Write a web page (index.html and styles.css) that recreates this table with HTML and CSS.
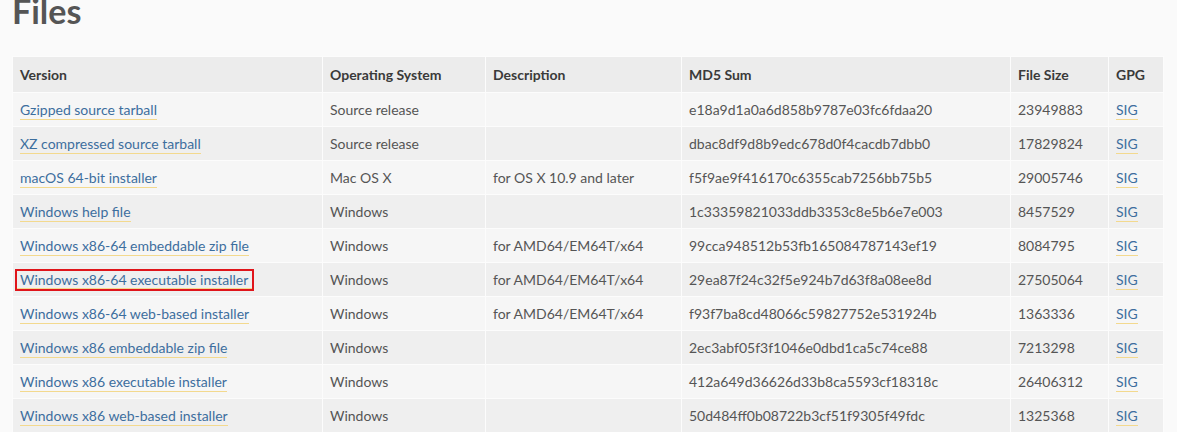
FILE: index.html
```html
<!DOCTYPE html>
<html>
<head>
<meta charset="utf-8">
<link rel="stylesheet" href="styles.css">
</head>
<body>
<div class="page">
  <h1 class="title">Files</h1>
  <table class="files">
    <colgroup>
      <col class="c-ver"><col class="c-os"><col class="c-desc"><col class="c-md5"><col class="c-size"><col class="c-gpg">
    </colgroup>
    <thead>
      <tr><th>Version</th><th>Operating System</th><th>Description</th><th>MD5 Sum</th><th>File Size</th><th>GPG</th></tr>
    </thead>
    <tbody>
      <tr><td><a href="#">Gzipped source tarball</a></td><td>Source release</td><td></td><td>e18a9d1a0a6d858b9787e03fc6fdaa20</td><td>23949883</td><td><a href="#">SIG</a></td></tr>
      <tr><td><a href="#">XZ compressed source tarball</a></td><td>Source release</td><td></td><td>dbac8df9d8b9edc678d0f4cacdb7dbb0</td><td>17829824</td><td><a href="#">SIG</a></td></tr>
      <tr><td><a href="#">macOS 64-bit installer</a></td><td>Mac OS X</td><td>for OS X 10.9 and later</td><td>f5f9ae9f416170c6355cab7256bb75b5</td><td>29005746</td><td><a href="#">SIG</a></td></tr>
      <tr><td><a href="#">Windows help file</a></td><td>Windows</td><td></td><td>1c33359821033ddb3353c8e5b6e7e003</td><td>8457529</td><td><a href="#">SIG</a></td></tr>
      <tr><td><a href="#">Windows x86-64 embeddable zip file</a></td><td>Windows</td><td>for AMD64/EM64T/x64</td><td>99cca948512b53fb165084787143ef19</td><td>8084795</td><td><a href="#">SIG</a></td></tr>
      <tr><td><a href="#" class="marked">Windows x86-64 executable installer</a></td><td>Windows</td><td>for AMD64/EM64T/x64</td><td>29ea87f24c32f5e924b7d63f8a08ee8d</td><td>27505064</td><td><a href="#">SIG</a></td></tr>
      <tr><td><a href="#">Windows x86-64 web-based installer</a></td><td>Windows</td><td>for AMD64/EM64T/x64</td><td>f93f7ba8cd48066c59827752e531924b</td><td>1363336</td><td><a href="#">SIG</a></td></tr>
      <tr><td><a href="#">Windows x86 embeddable zip file</a></td><td>Windows</td><td></td><td>2ec3abf05f3f1046e0dbd1ca5c74ce88</td><td>7213298</td><td><a href="#">SIG</a></td></tr>
      <tr><td><a href="#">Windows x86 executable installer</a></td><td>Windows</td><td></td><td>412a649d36626d33b8ca5593cf18318c</td><td>26406312</td><td><a href="#">SIG</a></td></tr>
      <tr><td><a href="#">Windows x86 web-based installer</a></td><td>Windows</td><td></td><td>50d484ff0b08722b3cf51f9305f49fdc</td><td>1325368</td><td><a href="#">SIG</a></td></tr>
    </tbody>
  </table>
</div>
</body>
</html>
```
FILE: styles.css
```css
html, body {
  margin: 0;
  padding: 0;
  background: #fafafa;
}
.page {
  padding: 0 14px 0 12px;
  font-family: Lato, "Noto Sans", sans-serif;
  color: #555;
}
.title {
  margin: -7px 0 0 0;
  font-size: 34px;
  line-height: 36px;
  font-weight: 700;
  color: #555;
  height: 63px;
}
.files {
  width: 1151px;
  table-layout: fixed;
  border-collapse: collapse;
  font-size: 14px;
}
.c-ver { width: 310px; }
.c-os { width: 163px; }
.c-desc { width: 196px; }
.c-md5 { width: 329px; }
.c-size { width: 98px; }
.c-gpg { width: 55px; }
.files th, .files td {
  text-align: left;
  padding: 0 7px;
  border: 1px solid #fcfcfc;
  white-space: nowrap;
  overflow: hidden;
}
.files th {
  height: 35px;
  background: #ececec;
  color: #3a3a3a;
  font-weight: 700;
}
.files td {
  height: 33px;
  color: #555;
}
.files tbody tr:nth-child(odd) td { background: #f6f6f6; }
.files tbody tr:nth-child(even) td { background: #efefef; }
.files a {
  color: #3d6e9e;
  text-decoration: none;
  border-bottom: 1px solid #f3d98e;
  padding-bottom: 1px;
}
.files a.marked {
  outline: 2px solid #e0151b;
  outline-offset: 0;
  padding: 0 4px 0 3px;
  margin-left: -3px;
}
```
